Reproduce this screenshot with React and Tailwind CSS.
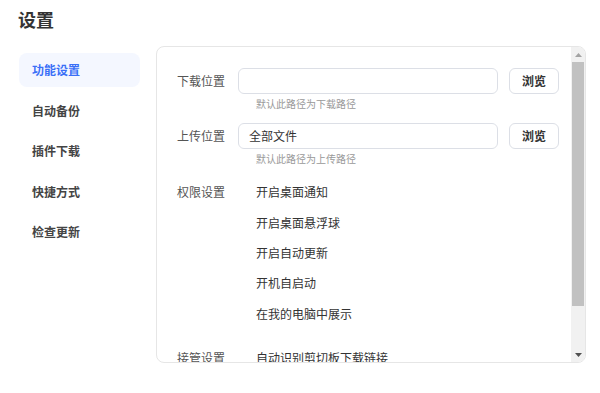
import React from "react";

const font = { fontFamily: '"Noto Sans CJK SC", "Noto Sans", sans-serif' };

function Row({ label, value, hint }) {
  return (
    <div className="flex flex-col">
      <div className="flex items-center">
        <div className="w-[61px] shrink-0 text-[12px] text-[#555]">{label}</div>
        <div className="h-[26px] w-[260px] rounded-[6px] border border-[#dcdfe6] bg-white px-[10px] flex items-center text-[12px] text-[#333]">
          {value}
        </div>
        <button className="ml-[11px] h-[26px] w-[50px] rounded-[6px] border border-[#dcdfe6] bg-white text-[12px] font-semibold text-[#333]">
          浏览
        </button>
      </div>
      <div className="ml-[79px] mt-[3px] h-[14px] leading-[14px] text-[10px] text-[#999]">{hint}</div>
    </div>
  );
}

export default function App() {
  const nav = ["功能设置", "自动备份", "插件下载", "快捷方式", "检查更新"];
  const perms = ["开启桌面通知", "开启桌面悬浮球", "开启自动更新", "开机自启动", "在我的电脑中展示"];
  return (
    <div className="w-[600px] h-[393px] bg-white overflow-hidden" style={font}>
      <div className="pl-[18px] pt-[7px] h-[46px] text-[18px] font-bold text-[#333] leading-[24px]">设置</div>
      <div className="flex">
        <div className="ml-[19px] mt-[7px] w-[121px] flex flex-col">
          {nav.map((n, i) => (
            <div
              key={n}
              className={
                i === 0
                  ? "h-[34px] mb-[6.6px] rounded-[8px] bg-[#f4f7ff] pl-[13px] flex items-center text-[12px] font-semibold text-[#3a6ff7]"
                  : "h-[34px] mb-[6.6px] pl-[13px] flex items-center text-[12px] font-semibold text-[#444]"
              }
            >
              {n}
            </div>
          ))}
        </div>
        <div className="ml-[16px] w-[430px] h-[317px] rounded-[8px] border border-[#e6e6e6] overflow-hidden flex">
          <div className="flex-1 pl-[20px] pt-[21px] flex flex-col">
            <Row label="下载位置" value="" hint="默认此路径为下载路径" />
            <div className="h-[12px] shrink-0" />
            <Row label="上传位置" value="全部文件" hint="默认此路径为上传路径" />
            <div className="h-[11px] shrink-0" />
            <div className="flex">
              <div className="w-[79px] shrink-0 h-[30px] flex items-center text-[12px] text-[#555]">权限设置</div>
              <div className="flex flex-col">
                {perms.map((p) => (
                  <div key={p} className="h-[30.4px] flex items-center text-[12px] text-[#333]">
                    {p}
                  </div>
                ))}
              </div>
            </div>
            <div className="h-[14px] shrink-0" />
            <div className="flex">
              <div className="w-[79px] shrink-0 h-[30px] flex items-center text-[12px] text-[#555]">接管设置</div>
              <div className="h-[30px] flex items-center text-[12px] text-[#333]">自动识别剪切板下载链接</div>
            </div>
          </div>
          <div className="w-[14px] shrink-0 bg-[#f1f1f1] flex flex-col items-center">
            <div className="h-[15px] shrink-0 flex items-center justify-center">
              <svg width="7" height="4" viewBox="0 0 7 4"><polygon points="3.5,0 7,4 0,4" fill="#a3a3a3" /></svg>
            </div>
            <div className="w-[12px] h-[244px] shrink-0 bg-[#c1c1c1]" />
            <div className="flex-1" />
            <div className="h-[15px] shrink-0 flex items-center justify-center">
              <svg width="7" height="4" viewBox="0 0 7 4"><polygon points="0,0 7,0 3.5,4" fill="#505050" /></svg>
            </div>
          </div>
        </div>
      </div>
    </div>
  );
}
